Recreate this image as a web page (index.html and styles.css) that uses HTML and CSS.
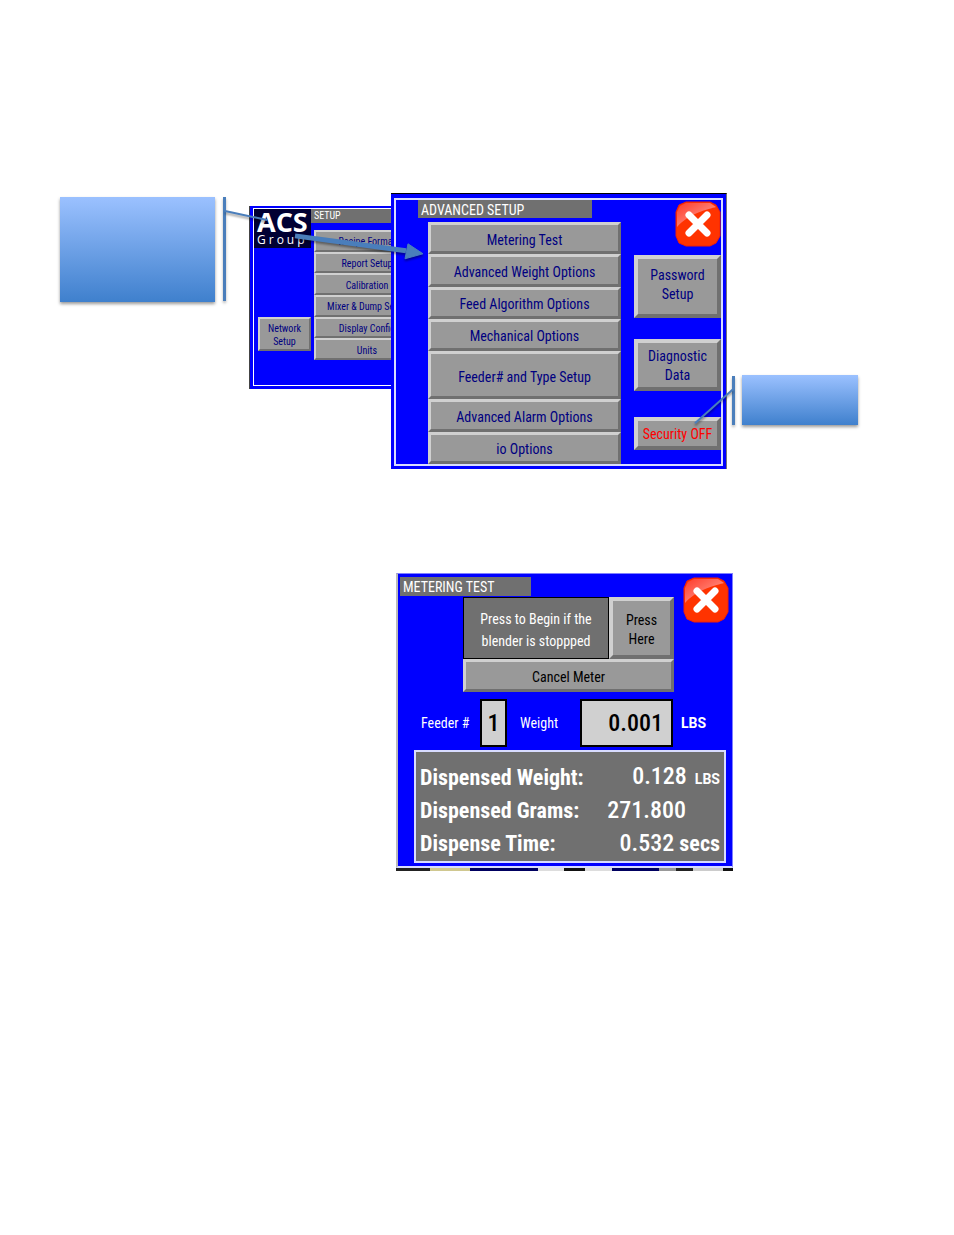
FILE: index.html
```html
<!DOCTYPE html>
<html lang="en">
<head>
<meta charset="UTF-8">
<meta name="viewport" content="width=device-width, initial-scale=1.0">
<title>Advanced Setup</title>
<link rel="stylesheet" href="styles.css">
</head>
<body>
<main class="page">
    <section class="setup-figure">
        <div class="callout callout-logo"></div>
        <div class="rule rule-logo"></div>

        <div class="setup-screen">
            <div class="setup-frame">
                <div class="setup-side">
                    <div class="logo">
                        <span class="logo-name">ACS</span>
                        <span class="logo-sub">Group</span>
                    </div>
                    <button class="key small-key network-key">Network<br>Setup</button>
                </div>
                <div class="setup-main">
                    <h2 class="title small-title">SETUP</h2>
                    <div class="small-menu">
                        <button class="key small-key">Recipe Format</button>
                        <button class="key small-key">Report Setup</button>
                        <button class="key small-key">Calibration</button>
                        <button class="key small-key">Mixer &amp; Dump Setup</button>
                        <button class="key small-key">Display Config</button>
                        <button class="key small-key">Units</button>
                    </div>
                </div>
            </div>
        </div>

        <div class="advanced-screen">
            <div class="advanced-frame">
                <div class="advanced-main">
                    <h1 class="title advanced-title">ADVANCED SETUP</h1>
                    <div class="menu">
                        <button class="key">Metering Test</button>
                        <button class="key">Advanced Weight Options</button>
                        <button class="key">Feed Algorithm Options</button>
                        <button class="key">Mechanical Options</button>
                        <button class="key">Feeder# and Type Setup</button>
                        <button class="key">Advanced Alarm Options</button>
                        <button class="key">io Options</button>
                    </div>
                </div>
                <div class="advanced-side">
                    <button class="close" aria-label="Close">
                        <svg viewBox="0 0 46 46">
                            <defs>
                                <linearGradient id="shine" x1="0" y1="0" x2="1" y2="1">
                                    <stop offset="0" stop-color="#ff3a2a"/>
                                    <stop offset="1" stop-color="#ffb0a4"/>
                                </linearGradient>
                            </defs>
                            <path d="M11 1H35L41 4L45 11V35L41 42L35 45H11L4 42L1 35V11L4 4Z" fill="#ff3300" stroke="#f02008" stroke-linejoin="round"/>
                            <path d="M2 26V11L5 5L11 2H35L41 6C34 8 14 12 2 26Z" fill="url(#shine)"/>
                            <path d="M14 14L32 32M32 14L14 32" stroke="#fff" stroke-width="7" stroke-linecap="round"/>
                        </svg>
                    </button>
                    <button class="key side-key password-key">Password<br>Setup</button>
                    <button class="key side-key diagnostic-key">Diagnostic<br>Data</button>
                    <button class="key side-key security-key">Security OFF</button>
                </div>
            </div>
        </div>

        <div class="rule rule-security"></div>
        <div class="callout callout-security"></div>

        <svg class="arrows" viewBox="0 0 798 277" preserveAspectRatio="none">
            <path d="M165 18L207 27" stroke-width="2"/>
            <path d="M235 43L346 58" stroke-width="5"/>
            <path d="M348 51L363 61L345 66Z" class="arrow-head"/>
            <path d="M673 197L635 231" stroke-width="2"/>
        </svg>
    </section>

    <section class="metering">
        <div class="metering-screen">
            <div class="metering-top">
                <h2 class="title metering-title">METERING TEST</h2>
                <div class="begin">
                    <p class="begin-text">Press to Begin if the<br>blender is stoppped</p>
                    <button class="key side-key dark-key">Press<br>Here</button>
                    <button class="key dark-key cancel-key">Cancel Meter</button>
                </div>
                <button class="close metering-close" aria-label="Close">
                    <svg viewBox="0 0 46 46">
                        <path d="M11 1H35L41 4L45 11V35L41 42L35 45H11L4 42L1 35V11L4 4Z" fill="#ff3300" stroke="#f02008" stroke-linejoin="round"/>
                        <path d="M2 26V11L5 5L11 2H35L41 6C34 8 14 12 2 26Z" fill="url(#shine)"/>
                        <path d="M14 14L32 32M32 14L14 32" stroke="#fff" stroke-width="7" stroke-linecap="round"/>
                    </svg>
                </button>
            </div>
            <div class="fields">
                <label class="feeder-label" for="feeder">Feeder #</label>
                <input class="feeder-input" id="feeder" type="text" value="1">
                <label class="weight-label" for="weight">Weight</label>
                <input class="weight-input" id="weight" type="text" value="0.001">
                <span class="unit">LBS</span>
            </div>
            <table class="results">
                <tr><th scope="row">Dispensed Weight:</th><td><span class="value">0.128</span><span class="unit">LBS</span></td></tr>
                <tr><th scope="row">Dispensed Grams:</th><td class="grams"><span class="value">271.800</span></td></tr>
                <tr><th scope="row">Dispense Time:</th><td><span class="value">0.532</span> secs</td></tr>
            </table>
        </div>
        <div class="strip"></div>
    </section>
</main>
</body>
</html>
```
FILE: styles.css
```css
* {
    box-sizing: border-box;
}
body {
    margin: 0;
    background-color: #fff;
    font-family: "Roboto Condensed", "Open Sans Condensed", Roboto, sans-serif;
    font-size: 14px;
}
h1, h2, p {
    margin: 0;
    font-weight: normal;
}
.page {
    padding: 193px 96px 120px 60px;
}

/* setup figure */
.setup-figure {
    position: relative;
    display: grid;
    grid-template-columns: minmax(0, 155fr) 34px minmax(0, 142fr) minmax(0, 336fr) 15px minmax(0, 116fr);
    align-items: start;
}
.callout {
    background: linear-gradient(#9bc1ff, #3f80cd);
    box-shadow: 0 2px 3px rgba(0, 0, 0, 0.4);
}
.callout-logo {
    height: 105px;
    margin-top: 4px;
}
.callout-security {
    height: 50px;
    margin-top: 182px;
}
.rule {
    background-color: #4a7ebb;
    box-shadow: 0 2px 3px rgba(0, 0, 0, 0.3);
}
.rule-logo {
    height: 104px;
    margin: 4px 23px 0 8px;
}
.rule-security {
    height: 49px;
    margin: 183px 7px 0 5px;
}
.arrows {
    position: absolute;
    top: 0;
    left: 0;
    width: 100%;
    height: 100%;
    fill: none;
    stroke: #4a7ebb;
    filter: drop-shadow(0 2px 1px rgba(0, 0, 0, 0.4));
    pointer-events: none;
}
.arrow-head {
    fill: #4a7ebb;
}

/* shared parts */
.title {
    background-color: #707070;
    color: #fff;
    font-size: 14px;
    line-height: 20px;
    padding: 0 3px;
}
.key {
    font: inherit;
    line-height: 19px;
    color: #000080;
    background-color: #999;
    border: 3px solid;
    border-color: #d0d0d0 #707070 #707070 #d0d0d0;
    padding: 4px 0 0;
    white-space: nowrap;
}
.side-key {
    border-width: 4px;
}
.dark-key {
    color: #000;
}
.close {
    width: 46px;
    height: 46px;
    border: none;
    background: none;
    padding: 0;
}
.close svg {
    display: block;
}

/* small setup screen */
.setup-screen {
    margin-top: 13px;
    padding: 2px 0 3px 3px;
    background-color: #00f;
    border-left: 1px solid #444;
    overflow: hidden;
}
.setup-frame {
    display: flex;
    height: 178px;
    border: 1px solid #fff;
    border-right: none;
}
.setup-side {
    flex: 0 0 56px;
}
.logo {
    height: 39px;
    background-color: #000033;
    color: #fff;
    font-family: "Open Sans", sans-serif;
    padding-left: 3px;
}
.logo-name {
    display: block;
    font-size: 27px;
    font-weight: bold;
    line-height: 25px;
}
.logo-sub {
    display: block;
    font-size: 12px;
    line-height: 12px;
    letter-spacing: 3px;
}
.small-title {
    font-size: 10px;
    line-height: 14px;
}
.small-key {
    font-size: 10px;
    line-height: 13px;
    border-width: 2px;
    padding: 2px 0 0;
}
.network-key {
    width: 53px;
    height: 34px;
    margin: 69px 0 0 4px;
}
.small-menu {
    display: grid;
    grid-template-rows: repeat(6, 1fr);
    width: 106px;
    height: 130px;
    margin: 7px 0 0 3px;
}

/* advanced setup screen */
.advanced-screen {
    padding: 4px 3px 3px;
    background-color: #00f;
    border-top: 1px solid #000;
    border-right: 1px solid #777;
}
.advanced-frame {
    display: grid;
    grid-template-columns: 1fr 87px;
    column-gap: 13px;
    padding-left: 22px;
    border: 2px solid #d8dcff;
}
.advanced-title {
    width: 174px;
    height: 18px;
}
.menu {
    display: grid;
    grid-template-rows: repeat(4, 2fr) 3fr repeat(2, 2fr);
    height: 242px;
    margin: 4px 0 0 10px;
}
.advanced-side {
    display: flex;
    flex-direction: column;
    padding-top: 1px;
}
.advanced-side .close {
    align-self: flex-end;
}
.password-key {
    height: 63px;
    margin-top: 8px;
    padding: 0 0 4px;
}
.diagnostic-key {
    height: 52px;
    margin-top: 21px;
    padding: 2px 0 0;
}
.security-key {
    height: 33px;
    margin-top: 26px;
    padding: 2px 0 0;
    color: #ff0000;
}

/* metering test screen */
.metering {
    width: 337px;
    margin: 104px 0 0 336px;
}
.metering-screen {
    padding: 3px 3px 3px 2px;
    background-color: #00f;
    border: 1px solid #8080ff;
    border-left: 2px solid #bbb;
    border-bottom: 2px solid #d8dcff;
}
.metering-top {
    display: grid;
    grid-template-columns: 63px 211px 1fr;
    grid-template-rows: 20px auto;
    align-items: start;
}
.metering-title {
    grid-column: 1 / 3;
    width: 131px;
    height: 19px;
}
.begin {
    grid-column: 2;
    grid-row: 2;
    display: grid;
    grid-template-columns: 146px 65px;
    grid-template-rows: 62px 33px;
}
.begin-text {
    background-color: #707070;
    border: 1px solid #000;
    color: #fff;
    line-height: 22px;
    padding-top: 10px;
    text-align: center;
}
.cancel-key {
    grid-column: 1 / 3;
}
.metering-close {
    grid-column: 3;
    grid-row: 1 / 3;
    justify-self: end;
}
.fields {
    display: flex;
    align-items: center;
    margin-top: 7px;
    padding-left: 21px;
    color: #fff;
}
.fields input {
    height: 48px;
    background-color: #d0d0d0;
    border: 2px solid #000;
    border-radius: 0;
    color: #000;
    font: inherit;
    font-size: 24px;
    font-weight: 500;
}
.feeder-label {
    width: 59px;
}
.weight-label {
    width: 60px;
    margin-left: 13px;
}
.fields .feeder-input {
    width: 27px;
    padding: 0;
    text-align: center;
}
.fields .weight-input {
    width: 93px;
    padding: 0 8px;
    text-align: right;
}
.unit {
    margin-left: 8px;
    font-family: Roboto, sans-serif;
    font-size: 14px;
    font-weight: bold;
}
.results {
    width: 312px;
    margin: 3px 0 0 14px;
    background-color: #707070;
    border: 2px solid #d8dcff;
    border-spacing: 0;
    padding: 9px 4px 1px;
    color: #fff;
    font-size: 22px;
    line-height: 26px;
    font-weight: bold;
}
.results th,
.results td {
    height: 33px;
    padding: 0;
    text-align: left;
    white-space: nowrap;
}
.results td {
    text-align: right;
}
.results .grams {
    padding-right: 34px;
}
.value {
    font-size: 24px;
    font-weight: 500;
}
.strip {
    height: 3px;
    background: linear-gradient(90deg, #222 10%, #d0c890 10% 22%, #000060 22% 42%, #ddd 42% 50%, #111 50% 56%, #ddd 56% 64%, #000060 64% 78%, #999 78% 83%, #222 83% 88%, #ccc 88% 97%, #111 97%);
}
```
